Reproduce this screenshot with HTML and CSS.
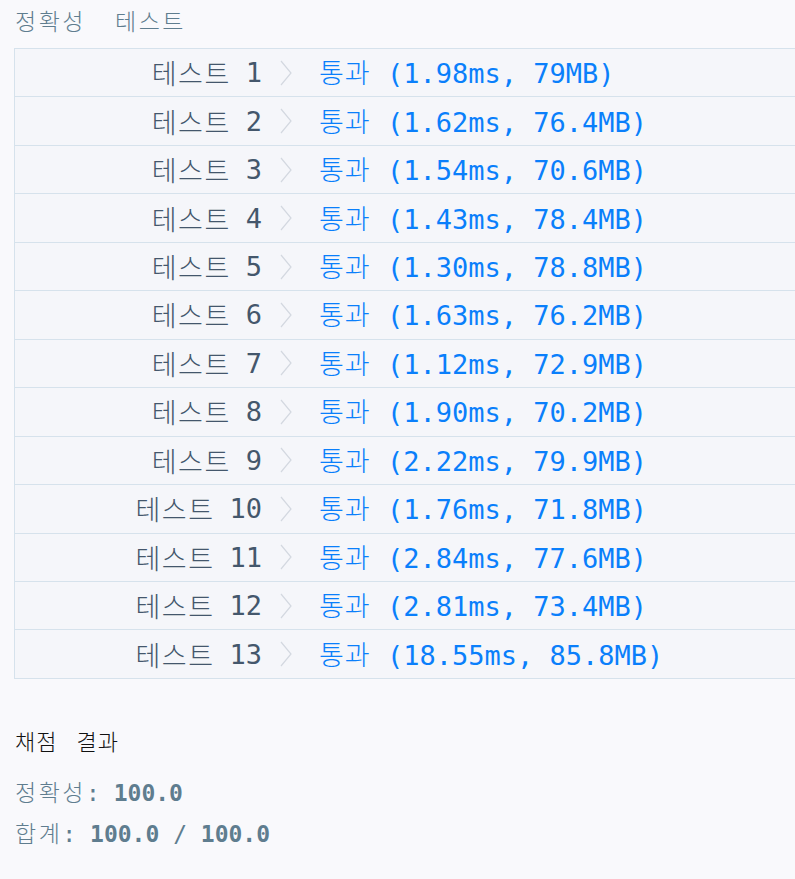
FILE: index.html
```html
<!DOCTYPE html>
<html lang="ko">
<head>
<meta charset="utf-8">
<link rel="stylesheet" href="styles.css">
</head>
<body>
<div class="page">
  <div class="section-title"><span class="ko-head">정확성</span><span class="ko-head">테스트</span></div>
  <div class="results">
    <div class="row"><div class="name"><span class="ko">테스트</span><span>1</span></div><div class="sep"><svg viewBox="0 0 12 26"><path d="M1 1 L11 13 L1 25"/></svg></div><div class="res"><span class="ko-res">통과</span> (1.98ms, 79MB)</div></div>
    <div class="row"><div class="name"><span class="ko">테스트</span><span>2</span></div><div class="sep"><svg viewBox="0 0 12 26"><path d="M1 1 L11 13 L1 25"/></svg></div><div class="res"><span class="ko-res">통과</span> (1.62ms, 76.4MB)</div></div>
    <div class="row"><div class="name"><span class="ko">테스트</span><span>3</span></div><div class="sep"><svg viewBox="0 0 12 26"><path d="M1 1 L11 13 L1 25"/></svg></div><div class="res"><span class="ko-res">통과</span> (1.54ms, 70.6MB)</div></div>
    <div class="row"><div class="name"><span class="ko">테스트</span><span>4</span></div><div class="sep"><svg viewBox="0 0 12 26"><path d="M1 1 L11 13 L1 25"/></svg></div><div class="res"><span class="ko-res">통과</span> (1.43ms, 78.4MB)</div></div>
    <div class="row"><div class="name"><span class="ko">테스트</span><span>5</span></div><div class="sep"><svg viewBox="0 0 12 26"><path d="M1 1 L11 13 L1 25"/></svg></div><div class="res"><span class="ko-res">통과</span> (1.30ms, 78.8MB)</div></div>
    <div class="row"><div class="name"><span class="ko">테스트</span><span>6</span></div><div class="sep"><svg viewBox="0 0 12 26"><path d="M1 1 L11 13 L1 25"/></svg></div><div class="res"><span class="ko-res">통과</span> (1.63ms, 76.2MB)</div></div>
    <div class="row"><div class="name"><span class="ko">테스트</span><span>7</span></div><div class="sep"><svg viewBox="0 0 12 26"><path d="M1 1 L11 13 L1 25"/></svg></div><div class="res"><span class="ko-res">통과</span> (1.12ms, 72.9MB)</div></div>
    <div class="row"><div class="name"><span class="ko">테스트</span><span>8</span></div><div class="sep"><svg viewBox="0 0 12 26"><path d="M1 1 L11 13 L1 25"/></svg></div><div class="res"><span class="ko-res">통과</span> (1.90ms, 70.2MB)</div></div>
    <div class="row"><div class="name"><span class="ko">테스트</span><span>9</span></div><div class="sep"><svg viewBox="0 0 12 26"><path d="M1 1 L11 13 L1 25"/></svg></div><div class="res"><span class="ko-res">통과</span> (2.22ms, 79.9MB)</div></div>
    <div class="row"><div class="name"><span class="ko">테스트</span><span>10</span></div><div class="sep"><svg viewBox="0 0 12 26"><path d="M1 1 L11 13 L1 25"/></svg></div><div class="res"><span class="ko-res">통과</span> (1.76ms, 71.8MB)</div></div>
    <div class="row"><div class="name"><span class="ko">테스트</span><span>11</span></div><div class="sep"><svg viewBox="0 0 12 26"><path d="M1 1 L11 13 L1 25"/></svg></div><div class="res"><span class="ko-res">통과</span> (2.84ms, 77.6MB)</div></div>
    <div class="row"><div class="name"><span class="ko">테스트</span><span>12</span></div><div class="sep"><svg viewBox="0 0 12 26"><path d="M1 1 L11 13 L1 25"/></svg></div><div class="res"><span class="ko-res">통과</span> (2.81ms, 73.4MB)</div></div>
    <div class="row"><div class="name"><span class="ko">테스트</span><span>13</span></div><div class="sep"><svg viewBox="0 0 12 26"><path d="M1 1 L11 13 L1 25"/></svg></div><div class="res"><span class="ko-res">통과</span> (18.55ms, 85.8MB)</div></div>
  </div>
  <div class="summary">
    <div class="summary-title"><span class="ko-sum">채점</span><span class="ko-sum">결과</span></div>
    <div class="summary-line"><span class="ko-line">정확성</span>: <b>100.0</b></div>
    <div class="summary-line"><span class="ko-line">합계</span>: <b>100.0</b> / <b>100.0</b></div>
  </div>
</div>
</body>
</html>
```

FILE: styles.css
```css
html, body {
  margin: 0;
  padding: 0;
  background: #f9f9fc;
  overflow: hidden;
}
.page {
  padding-left: 14px;
  font-family: "DejaVu Sans Mono", "Noto Sans CJK KR", monospace;
}
.section-title {
  height: 48px;
  display: flex;
  align-items: center;
  gap: 29px;
  padding-left: 1px;
  padding-bottom: 7px;
  box-sizing: border-box;
  font-family: "Noto Sans CJK KR", sans-serif;
  font-size: 23px;
  color: #5f7d8f;
  line-height: 1;
}
.ko-head {
  letter-spacing: 2.5px;
  font-weight: 300;
}
.results {
  width: 840px;
  border-top: 1px solid #d6e2ec;
  border-left: 1px solid #d6e2ec;
  background: #f5f6fa;
}
.row {
  height: 47.46px;
  border-bottom: 1px solid #d6e2ec;
  display: grid;
  grid-template-columns: 247px 57px 1fr;
  align-items: center;
  font-size: 27px;
  line-height: 1;
}
.name {
  display: flex;
  justify-content: flex-end;
  align-items: center;
  gap: 15px;
  color: #44576c;
}
.ko {
  font-family: "Noto Sans CJK KR", sans-serif;
  letter-spacing: 1.5px;
  font-weight: 300;
}
.sep {
  display: flex;
  align-items: center;
  padding-left: 18px;
}
.sep svg {
  width: 12px;
  height: 26px;
  fill: none;
  stroke: #d3d8e0;
  stroke-width: 1.2;
}
.res {
  color: #0a7ffb;
  white-space: nowrap;
}
.ko-res {
  font-family: "Noto Sans CJK KR", sans-serif;
  font-weight: 300;
  letter-spacing: 1px;
}
.summary {
  padding-top: 44px;
  padding-left: 1px;
}
.summary-title {
  display: flex;
  gap: 19px;
  font-family: "Noto Sans CJK KR", sans-serif;
  font-size: 22px;
  color: #111;
  height: 34px;
  line-height: 34px;
  margin-bottom: 14px;
}
.ko-sum {
  letter-spacing: 1px;
  font-weight: 300;
}
.summary-line {
  font-size: 23px;
  color: #5f7d8f;
  height: 41px;
  line-height: 41px;
}
.ko-line {
  font-family: "Noto Sans CJK KR", sans-serif;
  letter-spacing: 2.5px;
  font-weight: 300;
}
.summary-line b {
  font-weight: bold;
}
```
